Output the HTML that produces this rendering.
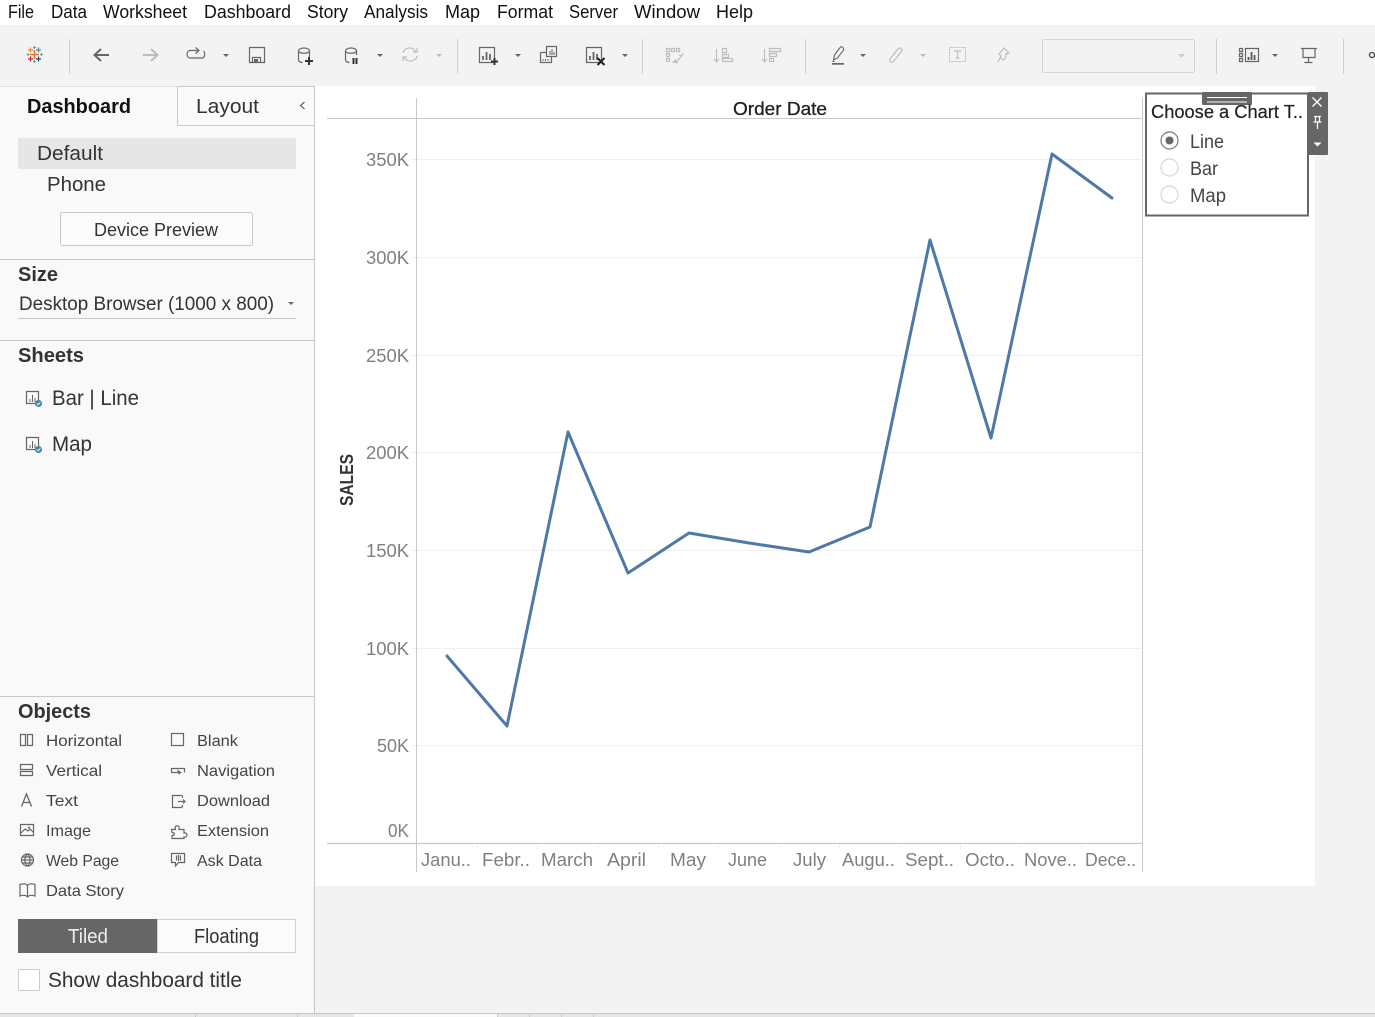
<!DOCTYPE html>
<html lang="en"><head><meta charset="utf-8"><title>Dashboard</title>
<style>
html,body{margin:0;padding:0;width:1375px;height:1017px;overflow:hidden;background:#f3f3f3}
svg{display:block;position:absolute;left:0;top:0}
text{font-family:"Liberation Sans",sans-serif;fill:#333;font-size:18px}
.m{font-size:18px;fill:#111}
.b{font-weight:bold}
.o{font-size:16px;fill:#444}
.a{font-size:18px;fill:#808080}
.i{fill:none;stroke:#666;stroke-width:1.2}
.d{fill:none;stroke:#bdbdbd;stroke-width:1.2}
.g{stroke:#f0f0f0;stroke-width:1}
.l{stroke:#c8c8c8;stroke-width:1}
</style></head><body>
<svg width="1375" height="1017" viewBox="0 0 1375 1017" xmlns="http://www.w3.org/2000/svg">
<!-- backgrounds -->
<rect width="1375" height="25" fill="#fff"/>
<rect y="25" width="1375" height="61" fill="#f3f3f3"/>
<rect y="86" width="315" height="927" fill="#f9f9f9"/>
<rect x="315" y="86" width="1000" height="800" fill="#fff"/>
<rect x="314" y="86" width="1" height="927" fill="#c8c8c8"/>
<!-- menu -->
<text class="m" x="8" y="18" textLength="26" lengthAdjust="spacingAndGlyphs">File</text>
<text class="m" x="51" y="18" textLength="36" lengthAdjust="spacingAndGlyphs">Data</text>
<text class="m" x="103" y="18" textLength="84" lengthAdjust="spacingAndGlyphs">Worksheet</text>
<text class="m" x="204" y="18" textLength="87" lengthAdjust="spacingAndGlyphs">Dashboard</text>
<text class="m" x="307" y="18" textLength="41" lengthAdjust="spacingAndGlyphs">Story</text>
<text class="m" x="364" y="18" textLength="64" lengthAdjust="spacingAndGlyphs">Analysis</text>
<text class="m" x="445" y="18" textLength="35" lengthAdjust="spacingAndGlyphs">Map</text>
<text class="m" x="497" y="18" textLength="56" lengthAdjust="spacingAndGlyphs">Format</text>
<text class="m" x="569" y="18" textLength="49" lengthAdjust="spacingAndGlyphs">Server</text>
<text class="m" x="634" y="18" textLength="66" lengthAdjust="spacingAndGlyphs">Window</text>
<text class="m" x="716" y="18" textLength="37" lengthAdjust="spacingAndGlyphs">Help</text>
<!-- toolbar separators -->
<g fill="#d0d0d0">
<rect x="69" y="39" width="1" height="35"/><rect x="457" y="39" width="1" height="35"/>
<rect x="642" y="39" width="1" height="35"/><rect x="805" y="39" width="1" height="35"/>
<rect x="1216" y="39" width="1" height="35"/><rect x="1343" y="39" width="1" height="35"/>
</g>
<!-- logo -->
<g fill="none" stroke-width="1.2">
<path d="M34.500 50v9M30 54.500h9" stroke="#e8762d" stroke-width="1.600"/>
<path d="M30.500 47.500v5M28 50h5" stroke="#f28e2b"/>
<path d="M38.500 47.500v5M36 50h5" stroke="#5b879b"/>
<path d="M30.500 56.500v5M28 59h5" stroke="#c72035"/>
<path d="M38.500 56.500v5M36 59h5" stroke="#1f447a"/>
<path d="M34.500 46v3M33 47.500h3M34.500 60v3M33 61.500h3M28 53v3M26.500 54.500h3M41.500 53v3M40 54.500h3" stroke="#7099a6" stroke-width="1"/>
</g>
<!-- back/forward -->
<path d="M109 55H95M101 49l-6.500 6 6.500 6" fill="none" stroke="#666" stroke-width="2"/>
<path d="M157 55h-14M151 49l6.500 6-6.500 6" fill="none" stroke="#bbb" stroke-width="2"/>
<path d="M199 50.500h-9c-4 0-4 7.500 0 7.500h12c3 0 3.500-5 1.500-7M195.500 47.500l3.500 3-3.500 3" class="i"/>
<path d="M223 54h6l-3 3z" fill="#666"/>
<!-- save -->
<path d="M249.500 47.500h15v15h-15zM252.500 62.500v-5h8v5" class="i"/><rect x="254" y="59" width="4" height="3.500" fill="#666"/>
<!-- datasource add -->
<path d="M298.500 51c0-4 11-4 11 0v6M298.500 51c0 3 11 3 11 0M298.500 51v9c0 1.500 2 2.500 4 2.500" class="i"/>
<path d="M305 61h8M309 57v8" stroke="#333" stroke-width="2" fill="none"/>
<path d="M345.500 51c0-4 11-4 11 0v4M345.500 51c0 3 11 3 11 0M345.500 51v9c0 1.500 2 2.500 4 2.500" class="i"/>
<path d="M353.500 58v6M356.500 58v6" stroke="#333" stroke-width="2"/>
<path d="M377 54h6l-3 3z" fill="#666"/>
<path d="M403 53c1-6 10-7 13-1M417 56c-1 6-10 7-13 1M413 52h4v-4M407 57h-4v4" class="d"/>
<path d="M436 54h6l-3 3z" fill="#bbb"/>
<!-- sheet icons -->
<path d="M479.500 47.500h15v15h-15z" class="i"/><path d="M483 60v-4M486.500 60v-8M490 60v-6" stroke="#666" stroke-width="1.800"/>
<path d="M491 61.500h7M494.500 58v7" stroke="#333" stroke-width="2"/>
<path d="M540.500 52.500h5.500M540.500 52.500v10h11v-6M546.500 46.500h10v10h-10z" class="i"/><path d="M550 55v-4M552 55v-6M554 55v-3M543 61v-2M545.500 61v-2M548 61v-2" stroke="#666" stroke-width="1"/>
<path d="M586.500 47.500h15v15h-15z" class="i"/><path d="M590 60v-4M593.500 60v-8M597 60v-6" stroke="#666" stroke-width="1.800"/>
<path d="M597.500 58l7 7M604.500 58l-7 7" stroke="#222" stroke-width="2"/>
<path d="M515 54h6l-3 3zM622 54h6l-3 3z" fill="#666"/>
<!-- disabled icons -->
<path d="M666.500 48.500h3v3h-3zM671.500 48.500h3v3h-3zM676.500 48.500h3v3h-3zM666.500 53.500h3v3h-3zM666.500 58.500h3v3h-3zM672 62c4 1 8-2 9-7M678 63l-4-1 2-3M679 55l3 1 1-3" class="d"/>
<path d="M716.500 49v13M714 59l2.500 3 2.500-3M722.500 48.500h4v4h-4zM722.500 54.500h6v3h-6zM722.500 58.500h10v3h-10z" class="d"/>
<path d="M764.500 49v13M762 59l2.500 3 2.500-3M769.500 48.500h11v3h-11zM769.500 53.500h7v3h-7zM769.500 58.500h4v3h-4z" class="d"/>
<!-- highlight -->
<path d="M833.500 60l1-5 6-8c1-1 4 1 3 3l-6 8zM832.500 61.500h2" fill="none" stroke="#666" stroke-width="1.100"/>
<rect x="832" y="63" width="12" height="1.700" fill="#666"/>
<path d="M860 54h6l-3 3z" fill="#666"/>
<path d="M890 59l8-10c2-2.500 5.500 0 3.500 2.500l-8 10c-2 2-5 0-3.500-2.500l7-9" class="d"/>
<path d="M920 54h6l-3 3z" fill="#bbb"/>
<rect x="949.500" y="47.500" width="16" height="14" fill="none" stroke="#bbb" stroke-dasharray="2 1"/>
<path d="M954 51h7M957.500 51v7M955.500 58h4" class="d"/>
<path d="M998 62l3-6-2-2 5-6 5 5-3 1-1 5-2 1-3-3" class="d"/>
<rect x="1042.500" y="39.500" width="152" height="33" rx="2" fill="#f3f3f3" stroke="#d5d5d5"/>
<path d="M1178 54h7l-3.500 4z" fill="#ccc"/>
<path d="M1239.500 48.500h3v3h-3zM1239.500 53.500h3v3h-3zM1239.500 58.500h3v3h-3zM1245.500 48.500h13v13h-13z" class="i"/>
<path d="M1248.500 60v-3M1251.500 60v-8M1254.500 60v-5" stroke="#555" stroke-width="1.800"/>
<path d="M1272 54h6l-3 3z" fill="#666"/>
<path d="M1301 48.500h16M1303 48.500v9h12v-9M1308.500 57.500v5M1304.500 62.500h8" class="i"/>
<circle cx="1372" cy="55" r="2.500" fill="none" stroke="#444" stroke-width="1.300"/>

<!-- panel tabs -->
<rect x="177" y="86" width="137" height="40" fill="#fafafa"/>
<path d="M0 86.500h177" stroke="#e2e2e2"/>
<path d="M177 86.500h137M177.500 86v39.500H314" fill="none" stroke="#c8c8c8"/>
<text class="b" x="27" y="113" textLength="104" lengthAdjust="spacingAndGlyphs" style="font-size:20px;fill:#111">Dashboard</text>
<text x="196" y="113" textLength="63" lengthAdjust="spacingAndGlyphs" style="font-size:20px">Layout</text>
<path d="M304.500 102l-4 3.500 4 3.500" fill="none" stroke="#666" stroke-width="1.200"/>
<!-- device -->
<rect x="18" y="138" width="278" height="31" fill="#e6e6e6"/>
<text x="37" y="160" textLength="66" lengthAdjust="spacingAndGlyphs" style="font-size:20px">Default</text>
<text x="47" y="191" textLength="59" lengthAdjust="spacingAndGlyphs" style="font-size:20px">Phone</text>
<rect x="60.500" y="212.500" width="192" height="33" rx="2" fill="#fbfbfb" stroke="#c8c8c8"/>
<text x="94" y="236" textLength="124" lengthAdjust="spacingAndGlyphs">Device Preview</text>
<rect y="259" width="314" height="1" fill="#c8c8c8"/>
<text class="b" x="18" y="281" textLength="40" lengthAdjust="spacingAndGlyphs" style="font-size:20px">Size</text>
<text x="19" y="310" textLength="255" lengthAdjust="spacingAndGlyphs" style="font-size:19px">Desktop Browser (1000 x 800)</text>
<path d="M288 302h6l-3 3z" fill="#666"/>
<rect x="18" y="318" width="278" height="1" fill="#c8c8c8"/>
<rect y="340" width="314" height="1" fill="#c8c8c8"/>
<text class="b" x="18" y="362" textLength="66" lengthAdjust="spacingAndGlyphs" style="font-size:20px">Sheets</text>
<!-- sheets -->
<path d="M26.500 391.500h12v12h-12z" class="i"/><path d="M30 402v-3M32.500 402v-7M35 402v-4" stroke="#666" stroke-width="1"/>
<circle cx="38.500" cy="403.500" r="3.500" fill="#3d87a8"/><path d="M36.800 403.500l1.300 1.300 2.200-2.400" stroke="#fff" stroke-width=".9" fill="none"/>
<text x="52" y="405" textLength="87" lengthAdjust="spacingAndGlyphs" style="font-size:21px">Bar | Line</text>
<path d="M26.500 437.500h12v12h-12z" class="i"/><path d="M30 448v-3M32.500 448v-7M35 448v-4" stroke="#666" stroke-width="1"/>
<circle cx="38.500" cy="449.500" r="3.500" fill="#3d87a8"/><path d="M36.800 449.500l1.300 1.300 2.200-2.400" stroke="#fff" stroke-width=".9" fill="none"/>
<text x="52" y="451" textLength="40" lengthAdjust="spacingAndGlyphs" style="font-size:21px">Map</text>
<!-- objects -->
<rect y="696" width="314" height="1" fill="#c8c8c8"/>
<text class="b" x="18" y="718" textLength="73" lengthAdjust="spacingAndGlyphs" style="font-size:20px">Objects</text>
<text class="o" x="46" y="746" textLength="76" lengthAdjust="spacingAndGlyphs">Horizontal</text>
<text class="o" x="46" y="776" textLength="56" lengthAdjust="spacingAndGlyphs">Vertical</text>
<text class="o" x="46" y="806" textLength="32" lengthAdjust="spacingAndGlyphs">Text</text>
<text class="o" x="46" y="836" textLength="45" lengthAdjust="spacingAndGlyphs">Image</text>
<text class="o" x="46" y="866" textLength="73" lengthAdjust="spacingAndGlyphs">Web Page</text>
<text class="o" x="46" y="896" textLength="78" lengthAdjust="spacingAndGlyphs">Data Story</text>
<text class="o" x="197" y="746" textLength="41" lengthAdjust="spacingAndGlyphs">Blank</text>
<text class="o" x="197" y="776" textLength="78" lengthAdjust="spacingAndGlyphs">Navigation</text>
<text class="o" x="197" y="806" textLength="73" lengthAdjust="spacingAndGlyphs">Download</text>
<text class="o" x="197" y="836" textLength="72" lengthAdjust="spacingAndGlyphs">Extension</text>
<text class="o" x="197" y="866" textLength="65" lengthAdjust="spacingAndGlyphs">Ask Data</text>
<path d="M20.500 734.500h5v11h-5zM27.500 734.500h5v11h-5zM20.500 764.500h12v5h-12zM20.500 771.500h12v4h-12z" class="i"/>
<path d="M21.500 806.500l5-12.500 5 12.500M23 802.500h7" fill="none" stroke="#666" stroke-width="1.300"/>
<path d="M20.500 824.500h13v11h-13zM21 833l4-4 3 2 2-2 3 3" class="i" stroke-width="1"/><circle cx="29" cy="827.500" r="1" fill="#666"/>
<circle cx="27.500" cy="860" r="6" class="i"/><path d="M21.500 860h12M27.500 854c-3.500 3-3.500 9 0 12M27.500 854c3.500 3 3.500 9 0 12M22.500 857h10M22.500 863h10" class="i" stroke-width=".8"/>
<path d="M20 884.500c3-1 6-1 7.500 1 1.500-2 4.500-2 7.500-1v11.500c-3-1-6-1-7.500 1-1.500-2-4.500-2-7.500-1zM27.500 885.500v11.500" class="i"/>
<rect x="171.500" y="733.500" width="12" height="12" class="i"/>
<path d="M179 772.500h-7.500v-4h13v4" class="i" stroke-width="1"/><path d="M177 769.500l5 3-2 .8-1 2z" fill="#666"/>
<path d="M182.500 795.500h-10v12h10M182.500 796v2M182.500 805v2M178 801.500h7M183 799.500l2 2-2 2" class="i" stroke-width="1"/>
<path d="M171.500 829.500h4c-2-5 5-5 3.500 0h5v3.500c4-1 4 5 0 4v1.500h-12v-3c3 0 3-3 0-3z" class="i" stroke-width="1"/>
<path d="M171.500 853.500h13v9h-6l-3 3.500v-3.500h-4zM176.500 855.500v5M178.500 855v6M180.500 855.500v5" class="i" stroke-width="1"/>
<!-- tiled / floating -->
<rect x="18" y="919" width="139" height="34" fill="#666"/>
<rect x="157.500" y="919.500" width="138" height="33" fill="#fbfbfb" stroke="#d0d0d0"/>
<text x="68" y="943" textLength="40" lengthAdjust="spacingAndGlyphs" style="font-size:20px;fill:#eee">Tiled</text>
<text x="194" y="943" textLength="65" lengthAdjust="spacingAndGlyphs" style="font-size:20px">Floating</text>
<rect x="18.500" y="969.500" width="21" height="21" rx="1" fill="#fff" stroke="#ccc"/>
<text x="48" y="987" textLength="194" lengthAdjust="spacingAndGlyphs" style="font-size:21px">Show dashboard title</text>

<!-- bottom tabs -->
<rect y="1013" width="1375" height="4" fill="#e6e6e6"/>
<rect y="1013" width="1375" height="1" fill="#c8c8c8"/>
<rect x="354" y="1014" width="143" height="3" fill="#fafafa"/>
<path d="M195.500 1014v3M297.500 1014v3M497.500 1014v3M529.500 1014v3M561.500 1014v3M593.500 1014v3" stroke="#c8c8c8"/>

<!-- chart -->
<g class="g">
<path d="M411 159.500h731M411 257.500h731M411 355.500h731M411 452.500h731M411 550.500h731M411 648.500h731M411 745.500h731"/>
</g>
<path d="M416.500 98v774M1142.500 98v774M327 118.500h815" stroke="#c8c8c8"/>
<path d="M327 843.500h815" stroke="#c8c8c8" stroke-width="1.200"/>
<path d="M477.500 844v5M537.500 844v5M598.500 844v5M658.500 844v5M718.500 844v5M779.500 844v5M839.500 844v5M899.500 844v5M960.500 844v5M1020.500 844v5M1081.500 844v5" stroke="#f0f0f0"/>
<text x="733" y="115" textLength="94" lengthAdjust="spacingAndGlyphs" style="font-size:18px;fill:#222;stroke:#222;stroke-width:.3">Order Date</text>
<text class="b" transform="translate(353 506) rotate(-90)" textLength="52" lengthAdjust="spacingAndGlyphs" style="font-size:18px;fill:#333">SALES</text>
<text class="a" x="366" y="166" textLength="43" lengthAdjust="spacingAndGlyphs">350K</text>
<text class="a" x="366" y="264" textLength="43" lengthAdjust="spacingAndGlyphs">300K</text>
<text class="a" x="366" y="362" textLength="43" lengthAdjust="spacingAndGlyphs">250K</text>
<text class="a" x="366" y="459" textLength="43" lengthAdjust="spacingAndGlyphs">200K</text>
<text class="a" x="366" y="557" textLength="43" lengthAdjust="spacingAndGlyphs">150K</text>
<text class="a" x="366" y="655" textLength="43" lengthAdjust="spacingAndGlyphs">100K</text>
<text class="a" x="377" y="752" textLength="32" lengthAdjust="spacingAndGlyphs">50K</text>
<text class="a" x="388" y="837" textLength="21" lengthAdjust="spacingAndGlyphs">0K</text>
<text class="a" x="421" y="866" textLength="50" lengthAdjust="spacingAndGlyphs">Janu..</text>
<text class="a" x="482" y="866" textLength="48" lengthAdjust="spacingAndGlyphs">Febr..</text>
<text class="a" x="541" y="866" textLength="52" lengthAdjust="spacingAndGlyphs">March</text>
<text class="a" x="607" y="866" textLength="39" lengthAdjust="spacingAndGlyphs">April</text>
<text class="a" x="670" y="866" textLength="36" lengthAdjust="spacingAndGlyphs">May</text>
<text class="a" x="728" y="866" textLength="39" lengthAdjust="spacingAndGlyphs">June</text>
<text class="a" x="793" y="866" textLength="33" lengthAdjust="spacingAndGlyphs">July</text>
<text class="a" x="842" y="866" textLength="53" lengthAdjust="spacingAndGlyphs">Augu..</text>
<text class="a" x="905" y="866" textLength="49" lengthAdjust="spacingAndGlyphs">Sept..</text>
<text class="a" x="965" y="866" textLength="50" lengthAdjust="spacingAndGlyphs">Octo..</text>
<text class="a" x="1024" y="866" textLength="53" lengthAdjust="spacingAndGlyphs">Nove..</text>
<text class="a" x="1085" y="866" textLength="51" lengthAdjust="spacingAndGlyphs">Dece..</text>
<polyline points="447,656 507,726 568,432 628,573 689,533 749,543 809,552 870,527 930,240 991,438 1052,154 1112,198" fill="none" stroke="#4e79a7" stroke-width="3" stroke-linejoin="round" stroke-linecap="round"/>

<!-- legend -->
<rect x="1146" y="93.500" width="162" height="122" fill="#fff" stroke="#666" stroke-width="2"/>
<rect x="1308" y="92" width="20" height="63" rx="1" fill="#666"/>
<rect x="1202" y="92" width="50" height="13" rx="1" fill="#666"/>
<path d="M1207 97.500h40M1207 102h40" stroke="#fff" stroke-width="1"/>
<path d="M1312.500 97.500l9 9M1321.500 97.500l-9 9" stroke="#fff" stroke-width="1.300"/>
<path d="M1314 116.500h7M1315.500 116.500v5M1319.500 116.500v5M1313.500 122h8M1317.500 122v7" stroke="#fff" stroke-width="1.200" fill="none"/>
<path d="M1313.500 142.500h8l-4 4z" fill="#fff"/>
<text x="1151" y="118" textLength="152" lengthAdjust="spacingAndGlyphs" style="font-size:18px;fill:#222;stroke:#222;stroke-width:.2">Choose a Chart T..</text>
<circle cx="1169.500" cy="140.500" r="8.500" fill="#fff" stroke="#777" stroke-width="1.200"/><circle cx="1169.500" cy="140.500" r="4" fill="#666"/>
<circle cx="1169.500" cy="167.500" r="8.500" fill="#fff" stroke="#d5d5d5" stroke-width="1.200"/>
<circle cx="1169.500" cy="194.500" r="8.500" fill="#fff" stroke="#d5d5d5" stroke-width="1.200"/>
<text x="1190" y="148" textLength="34" lengthAdjust="spacingAndGlyphs" style="font-size:19px;fill:#444">Line</text>
<text x="1190" y="175" textLength="28" lengthAdjust="spacingAndGlyphs" style="font-size:19px;fill:#444">Bar</text>
<text x="1190" y="202" textLength="36" lengthAdjust="spacingAndGlyphs" style="font-size:19px;fill:#444">Map</text>
</svg>
</body></html>
